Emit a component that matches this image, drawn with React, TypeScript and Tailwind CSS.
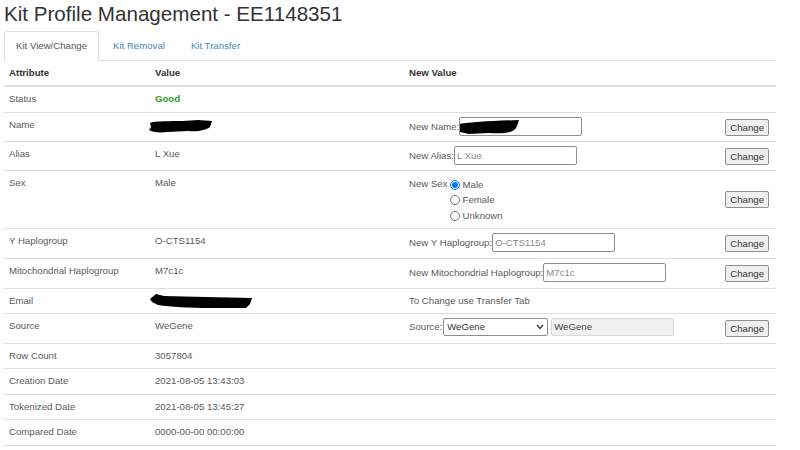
import { FC, ReactNode } from 'react';

const font = "font-['Liberation_Sans',Arial,sans-serif]";

const Scribble: FC<{ w: number, h: number, d: string }> = ({ w, h, d }) => (
  <svg width={w} height={h} viewBox={`0 0 ${w} ${h}`} className="block">
    <path d={d} fill="#000" />
  </svg>
);

const TextInput: FC<{ width?: string, value?: string, children?: ReactNode }> = (props) => (
  <div className={`${props.width ?? 'w-[123px]'} h-[19px] border border-[#8f8f8f] rounded-[2px] bg-white flex items-center px-[2px] text-[#8a8a8a] overflow-hidden`}>
    {props.children ?? props.value}
  </div>
);

const ChangeButton = () => (
  <button className="h-[17px] px-[4px] border border-[#8f8f8f] rounded-[2px] bg-[#efefef] text-[#333] leading-[15px]">
    Change
  </button>
);

const Radio: FC<{ checked?: boolean, label: string }> = ({ checked, label }) => (
  <div className="flex items-center h-[15.5px]">
    {checked ? (
      <span className="w-[10px] h-[10px] rounded-full border-[1px] border-[#0075ff] bg-white flex items-center justify-center">
        <span className="w-[6px] h-[6px] rounded-full bg-[#0075ff]" />
      </span>
    ) : (
      <span className="w-[10px] h-[10px] rounded-full border border-[#767676] bg-white" />
    )}
    <span className="ml-[3px]">{label}</span>
  </div>
);

type Row = { attr: string, value: ReactNode, edit?: ReactNode, button?: boolean, h: string, inputs?: boolean };

const rows: Row[] = [
  { attr: 'Status', value: <span className="font-bold text-[#2f9a2f]">Good</span>, h: 'h-[26px]' },
  {
    attr: 'Name', h: 'h-[29px]', button: true, inputs: true,
    value: <div className="-ml-[7px] pt-[1px]"><Scribble w={66} h={14} d="M2 4 C10 1 30 3 50 1 L64 2 L62 8 C58 11 50 13 40 12 L20 13 C10 14 4 13 1 11 L3 8 Z" /></div>,
    edit: (
      <div className="flex items-center">
        <span>New Name:</span>
        <TextInput>
          <div className="-ml-[3px]"><Scribble w={62} h={16} d="M0 5 C12 3 30 2 60 1 L58 7 C56 12 52 15 30 14 L10 15 L1 13 Z" /></div>
        </TextInput>
      </div>
    ),
  },
  {
    attr: 'Alias', value: 'L Xue', h: 'h-[29px]', button: true, inputs: true,
    edit: (
      <div className="flex items-center">
        <span>New Alias:</span>
        <TextInput value="L Xue" />
      </div>
    ),
  },
  {
    attr: 'Sex', value: 'Male', h: 'h-[58px]', button: true,
    edit: (
      <div className="flex items-start">
        <span className="mr-[2px] mt-[1px]">New Sex</span>
        <div className="flex flex-col mt-[1px]">
          <Radio checked label="Male" />
          <Radio label="Female" />
          <Radio label="Unknown" />
        </div>
      </div>
    ),
  },
  {
    attr: 'Y Haplogroup', value: 'O-CTS1154', h: 'h-[30px]', button: true, inputs: true,
    edit: (
      <div className="flex items-center">
        <span>New Y Haplogroup:</span>
        <TextInput value="O-CTS1154" />
      </div>
    ),
  },
  {
    attr: 'Mitochondrial Haplogroup', value: 'M7c1c', h: 'h-[30px]', button: true, inputs: true,
    edit: (
      <div className="flex items-center">
        <span>New Mitochondrial Haplogroup:</span>
        <TextInput value="M7c1c" />
      </div>
    ),
  },
  {
    attr: 'Email', h: 'h-[25px]',
    value: <div className="-ml-[5px] -mt-[1px]"><Scribble w={104} h={16} d="M0 6 L6 1 L14 3 C40 4 70 4 102 5 L100 11 L96 15 L60 15 C40 15 20 14 8 12 L2 9 Z" /></div>,
    edit: <span>To Change use Transfer Tab</span>,
  },
  {
    attr: 'Source', value: 'WeGene', h: 'h-[30px]', button: true, inputs: true,
    edit: (
      <div className="flex items-center">
        <span>Source:</span>
        <div className="relative ml-[1px] w-[105px] h-[18px] border border-[#8f8f8f] rounded-[2px] bg-white flex items-center px-[3px] text-[#333]">
          WeGene
          <svg width="8" height="6" viewBox="0 0 8 6" className="absolute right-[3px] top-[5px]">
            <path d="M1 1 L4 4.5 L7 1" stroke="#333" strokeWidth="1.3" fill="none" />
          </svg>
        </div>
        <div className="ml-[3px] w-[123px] h-[18px] border border-[#d8d8d8] rounded-[2px] bg-[#f0f0f0] flex items-center px-[2px] text-[#444]">
          WeGene
        </div>
      </div>
    ),
  },
  { attr: 'Row Count', value: '3057804', h: 'h-[25px]' },
  { attr: 'Creation Date', value: '2021-08-05 13:43:03', h: 'h-[26px]' },
  { attr: 'Tokenized Date', value: '2021-08-05 13:45:27', h: 'h-[25px]' },
  { attr: 'Compared Date', value: '0000-00-00 00:00:00', h: 'h-[26px]' },
];

const cols = 'grid grid-cols-[146px_254px_316px_56px]';

export default function App() {
  return (
    <div className={`${font} w-[800px] h-[450px] bg-white overflow-hidden pl-[4px] text-[9.65px] text-[#5a5a5a]`}>
      <h1 className="text-[20.6px] leading-[24px] pt-[2px] h-[31px] text-[#333] font-normal">
        Kit Profile Management - EE1148351
      </h1>

      <div className="w-[772px] flex border-b border-[#ddd] h-[30px]">
        <div className="h-[30px] px-[11px] leading-[27px] border border-[#ddd] border-b-white rounded-t-[3px] bg-white text-[#555] mr-[2px]">
          Kit View/Change
        </div>
        <div className="h-[29px] px-[11px] leading-[27px] border border-transparent text-[#4a86c0] mr-[2px]">
          Kit Removal
        </div>
        <div className="h-[29px] px-[11px] leading-[27px] border border-transparent text-[#4a86c0]">
          Kit Transfer
        </div>
      </div>

      <div className="w-[772px] leading-[14px]">
        <div className={`${cols} h-[26px] border-b-2 border-[#ddd] font-bold text-[#333]`}>
          <div className="pl-[5px] pt-[5px]">Attribute</div>
          <div className="pl-[5px] pt-[5px]">Value</div>
          <div className="pl-[5px] pt-[5px]">New Value</div>
          <div />
        </div>
        {rows.map((r) => (
          <div key={r.attr} className={`${cols} ${r.h} border-b border-[#ddd]`}>
            <div className="pl-[5px] pt-[5px]">{r.attr}</div>
            <div className="pl-[5px] pt-[5px]">{r.value}</div>
            <div className={`pl-[5px] ${r.inputs ? 'pt-[4px]' : 'pt-[5px]'}`}>{r.edit}</div>
            <div className="flex items-center justify-end pr-[7px]">
              {r.button && <ChangeButton />}
            </div>
          </div>
        ))}
      </div>
    </div>
  );
}
